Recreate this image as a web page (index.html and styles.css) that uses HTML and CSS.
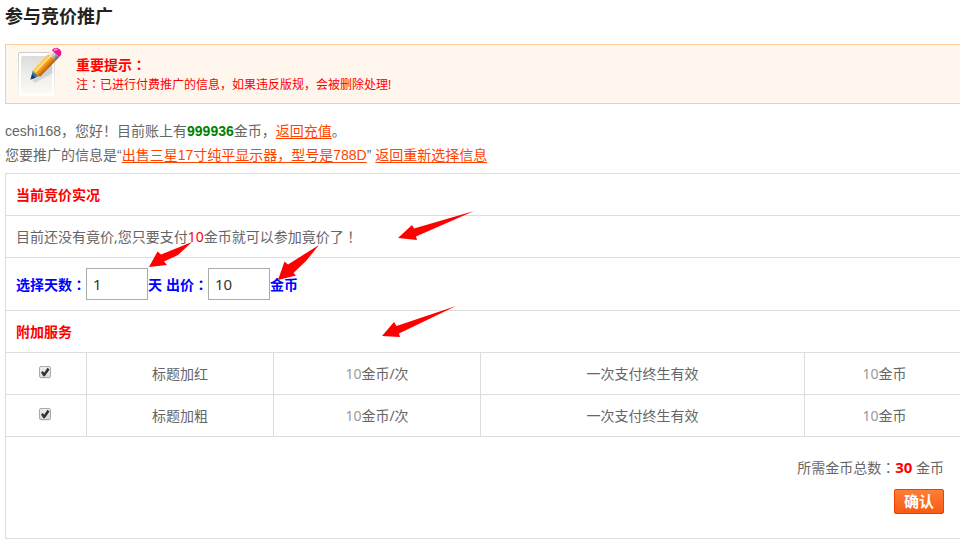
FILE: index.html
```html
<!DOCTYPE html>
<html lang="zh-CN">
  <head>
    <meta charset="utf-8">
    <title>参与竞价推广</title>
    <link rel="stylesheet" href="styles.css">
  </head>
  <body>
    <div class="page">
      <h1>参与竞价推广</h1>

      <div class="notice">
        <svg class="notice-icon" width="50" height="54" viewBox="0 0 50 54" aria-hidden="true">
          <defs>
            <linearGradient id="paper" x1="0" y1="0" x2="0" y2="1">
              <stop offset="0" stop-color="#dcdcdc"/>
              <stop offset="0.5" stop-color="#eeeeee"/>
              <stop offset="1" stop-color="#fffaf4"/>
            </linearGradient>
            <linearGradient id="frame" x1="0" y1="0" x2="0" y2="1">
              <stop offset="0" stop-color="#cccccc"/>
              <stop offset="0.7" stop-color="#eeeeee"/>
              <stop offset="1" stop-color="#fff6ee"/>
            </linearGradient>
            <linearGradient id="wood" x1="0" y1="0" x2="0" y2="1">
              <stop offset="0" stop-color="#fbd56a"/>
              <stop offset="0.45" stop-color="#fba61c"/>
              <stop offset="1" stop-color="#b55a08"/>
            </linearGradient>
            <linearGradient id="metal" x1="0" y1="0" x2="0" y2="1">
              <stop offset="0" stop-color="#ffffff"/>
              <stop offset="0.5" stop-color="#c4c4c8"/>
              <stop offset="1" stop-color="#55555c"/>
            </linearGradient>
          </defs>
          <rect x="2.5" y="5.5" width="36" height="44" rx="1.5" fill="#ffffff" stroke="url(#frame)"/>
          <rect x="5" y="9" width="31" height="38" rx="2" fill="url(#paper)"/>
          <path d="M16 33L36 14l1 12-18 10z" fill="#999999" opacity="0.3"/>
          <g transform="translate(14.500 32.500) rotate(-46)">
            <path d="M0 0L9-5v10z" fill="#f3d6a4"/>
            <path d="M0 0L8-4.500v8z" fill="#2f78b8"/>
            <path d="M0 0L5-2.500v5z" fill="#173a66"/>
            <path d="M9-5h22v10H9L7 2 8.500 0 7-2z" fill="url(#wood)"/>
            <path d="M9-2h22" stroke="#ffe08a" stroke-width="1.500"/>
            <path d="M31-5h5v10h-5z" fill="url(#metal)"/>
            <path d="M36-5h2q4 1 4 5t-4 5h-2z" fill="#e9178a"/>
            <path d="M37-3h2q1 1 1 2" fill="none" stroke="#ff9acb" stroke-width="1.500"/>
          </g>
        </svg>
        <div>
          <strong>重要提示<span class="mid" lang="zh-TW">：</span></strong>
          <p>注<span class="mid" lang="zh-TW">：</span>已进行付费推广的信息，如果违反版规，会被删除处理!</p>
        </div>
      </div>

      <div class="intro">
        <p>ceshi168，您好！目前账上有<b class="balance">999936</b>金币，<a href="#">返回充值</a>。</p>
        <p>您要推广的信息是“<a href="#">出售三星17寸纯平显示器，型号是788D</a>” <a href="#">返回重新选择信息</a></p>
      </div>

      <form>
        <table>
          <colgroup>
            <col class="col-check">
            <col class="col-name">
            <col class="col-price">
            <col class="col-term">
            <col>
          </colgroup>
          <tbody>
            <tr>
              <th colspan="5">当前竞价实况</th>
            </tr>
            <tr>
              <td colspan="5">目前还没有竟价,您只要支付<span class="red">10</span>金币就可以参加竟价了<span class="mid" lang="zh-TW">！</span></td>
            </tr>
            <tr>
              <td colspan="5">
                <div class="bid">
                  <label for="days">选择天数<span class="mid" lang="zh-TW">：</span></label>
                  <input type="text" id="days" value="1">
                  <span class="unit">天</span>
                  <label for="price">出价<span class="mid" lang="zh-TW">：</span></label>
                  <input type="text" id="price" value="10">
                  <span>金币</span>
                </div>
              </td>
            </tr>
            <tr>
              <th colspan="5">附加服务</th>
            </tr>
            <tr class="service">
              <td><input type="checkbox" id="red-title" aria-label="标题加红" checked></td>
              <td><label for="red-title">标题加红</label></td>
              <td><span class="num">10</span>金币/次</td>
              <td>一次支付终生有效</td>
              <td><span class="num">10</span>金币</td>
            </tr>
            <tr class="service">
              <td><input type="checkbox" id="bold-title" aria-label="标题加粗" checked></td>
              <td><label for="bold-title">标题加粗</label></td>
              <td><span class="num">10</span>金币/次</td>
              <td>一次支付终生有效</td>
              <td><span class="num">10</span>金币</td>
            </tr>
            <tr>
              <td colspan="5" class="summary">
                <p>所需金币总数<span class="mid" lang="zh-TW">：</span><b class="red">30</b> 金币</p>
                <button type="submit">确认</button>
              </td>
            </tr>
          </tbody>
        </table>
      </form>
    </div>

    <!-- Pointer arrows laid over the form -->
    <svg class="arrows" width="480" height="340" viewBox="0 0 480 340" aria-hidden="true">
      <path d="M474 211L414 228.500 412 225 398 238 417 240 416 236.500z"/>
      <path d="M456 306L396.500 326 394 322 382 336 400 337 399 333.500z"/>
      <path d="M192 242L161 254.500 157.500 251.500 149 267 167 265 164 261.500 178 255z"/>
      <path d="M319 245L288 264.500 284.500 261.500 278 280 296 275.500 293.500 273 306 261z"/>
    </svg>
  </body>
</html>
```

FILE: styles.css
```css
/* Global styles */
body {
  background: #fff;
  color: #666;
  font-family: "Noto Sans", "Noto Sans CJK SC", sans-serif;
  font-size: 14px;
  line-height: 20px;
  margin: 0;
  overflow-x: hidden;
  position: relative;
}

p {
  margin: 0;
}

a {
  color: #f40;
  text-decoration: underline;
  text-underline-offset: 2px;
}

.page {
  margin: 0 -5px 0 5px;
}

.red {
  color: #f00;
}

/* Punctuation centred in its cell */
.mid {
  font-family: "Noto Sans CJK TC", sans-serif;
}

h1 {
  color: #222;
  font-size: 18px;
  line-height: 32px;
  margin: 0 0 12px;
}

/* Notice */
.notice {
  align-items: center;
  background: #fff6ed;
  border: 1px solid #fc9;
  box-sizing: border-box;
  color: #f00;
  display: flex;
  font-size: 12px;
  gap: 10px;
  height: 60px;
  line-height: 18px;
  padding-left: 10px;
}

.notice-icon {
  flex: none;
}

.notice strong {
  font-size: 14px;
}

/* Account text */
.intro {
  font-family: "Liberation Sans", "Noto Sans CJK SC", sans-serif;
  line-height: 24px;
  padding: 15px 0 6px;
}

.balance {
  color: green;
}

/* Bid table */
table {
  border-collapse: collapse;
  table-layout: fixed;
  width: 100%;
}

.col-check {
  width: 81px;
}

.col-name {
  width: 187px;
}

.col-price {
  width: 207px;
}

.col-term {
  width: 324px;
}

th,
td {
  border: 1px solid #ddd;
  font-weight: normal;
  line-height: 21px;
  padding: 10px;
  text-align: left;
}

th {
  color: #f00;
  font-weight: bold;
}

.bid {
  align-items: center;
  color: #00f;
  display: flex;
  font-weight: bold;
}

.unit {
  margin-right: 4px;
}

input[type="text"] {
  border: 1px solid #aaa;
  border-radius: 0;
  box-sizing: border-box;
  color: #333;
  font-family: inherit;
  font-size: 15px;
  height: 32px;
  padding: 0 6px;
  width: 62px;
}

.service td {
  text-align: center;
}

.num {
  color: #999;
}

input[type="checkbox"] {
  appearance: none;
  background: linear-gradient(#eee, #ddd);
  border: 1px solid #aaa;
  border-radius: 2px;
  box-shadow: 0 1px 1px #eee;
  box-sizing: border-box;
  display: inline-block;
  height: 12px;
  margin: 0 2px 1px 0;
  width: 12px;
}

input[type="checkbox"]:checked::after {
  background: #333;
  clip-path: polygon(10% 55%, 28% 40%, 42% 58%, 75% 8%, 96% 24%, 48% 92%, 34% 92%);
  content: "";
  display: block;
  height: 10px;
  width: 10px;
}

.summary {
  padding: 20px 20px 24px;
  text-align: right;
}

.summary p {
  margin-bottom: 11px;
}

.summary .red {
  font-size: 15px;
}

button {
  background: linear-gradient(#ff7e35, #f95b16);
  border: 1px solid #f04000;
  border-radius: 2px;
  color: #fff;
  cursor: pointer;
  display: block;
  font-family: inherit;
  font-size: 15px;
  font-weight: bold;
  height: 25px;
  line-height: 23px;
  margin-left: auto;
  padding: 0;
  width: 50px;
}

.arrows {
  fill: #f00;
  left: 0;
  pointer-events: none;
  position: absolute;
  top: 0;
}
```
